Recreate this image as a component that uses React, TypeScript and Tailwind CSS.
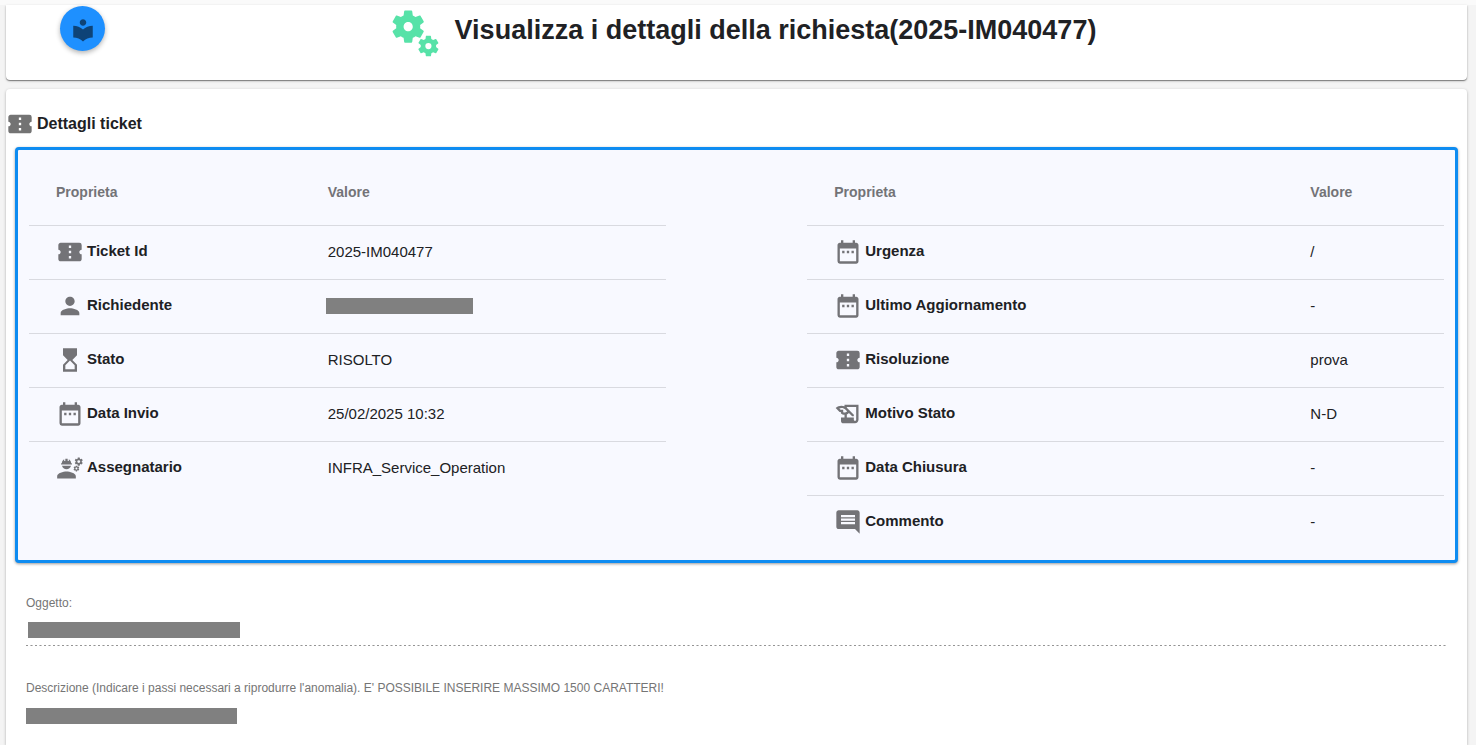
import React from "react";
import type { IconType } from "react-icons";
import {
  MdComment,
  MdConfirmationNumber,
  MdDateRange,
  MdEngineering,
  MdHistoryEdu,
  MdHourglassTop,
  MdLocalLibrary,
  MdMiscellaneousServices,
  MdPerson,
} from "react-icons/md";

type Row = { icon: IconType; label: string; value?: string };

const requestRows: Row[] = [
  { icon: MdConfirmationNumber, label: "Ticket Id", value: "2025-IM040477" },
  { icon: MdPerson, label: "Richiedente" },
  { icon: MdHourglassTop, label: "Stato", value: "RISOLTO" },
  { icon: MdDateRange, label: "Data Invio", value: "25/02/2025 10:32" },
  { icon: MdEngineering, label: "Assegnatario", value: "INFRA_Service_Operation" },
];

const progressRows: Row[] = [
  { icon: MdDateRange, label: "Urgenza", value: "/" },
  { icon: MdDateRange, label: "Ultimo Aggiornamento", value: "-" },
  { icon: MdConfirmationNumber, label: "Risoluzione", value: "prova" },
  { icon: MdHistoryEdu, label: "Motivo Stato", value: "N-D" },
  { icon: MdDateRange, label: "Data Chiusura", value: "-" },
  { icon: MdComment, label: "Commento", value: "-" },
];

function PropertyTable({ rows, labelWidth }: { rows: Row[]; labelWidth: string }) {
  return (
    <table className="w-[45%] table-fixed self-start border-collapse text-left">
      <thead>
        <tr className="h-16 border-b border-[#d9dae0] text-sm text-[#737377]">
          <th className={`${labelWidth} pb-0.5 pl-[27px] font-bold`}>Proprieta</th>
          <th className="pb-0.5 pl-0.5 font-bold">Valore</th>
        </tr>
      </thead>
      <tbody>
        {rows.map(({ icon: Icon, label, value }) => (
          <tr key={label} className="h-[54px] border-b border-[#d9dae0] text-[15px] text-[#202124] last:border-b-0">
            <th scope="row" className="pl-[27px] font-bold">
              <span className="flex items-center gap-[3px]">
                <Icon className="size-7 shrink-0 text-[#737377]" />
                <span className="pb-0.5">{label}</span>
              </span>
            </th>
            <td>
              {value ? <span className="pl-0.5">{value}</span> : <span className="block h-4 w-[147px] bg-[#808080]" />}
            </td>
          </tr>
        ))}
      </tbody>
    </table>
  );
}

export default function App() {
  return (
    <div className="flex min-h-screen flex-col border-t-[5px] border-[#fafafa] bg-[#f4f4f4] pr-[9px] pl-1.5 font-['Liberation_Sans',Arial,sans-serif] text-[#202124]">
      <header className="grid h-[75px] grid-cols-[1fr_auto_1fr] items-start rounded-b bg-white pt-px pr-[43px] pl-[54px] shadow-[0_1px_1px_rgba(0,0,0,0.4),0_1px_3px_rgba(0,0,0,0.2)]">
        <button
          type="button"
          aria-label="Guida"
          className="flex size-[45px] items-center justify-center rounded-full bg-[#1e90ff] pt-0.5 text-[#0e4377] shadow-[0_2px_5px_rgba(0,0,0,0.3)]"
        >
          <MdLocalLibrary className="size-[26px]" />
        </button>
        <div className="flex items-start gap-3">
          <MdMiscellaneousServices className="size-[55px] shrink-0 text-[#57e2a8]" />
          <h1 className="pt-2 text-[27px] leading-8 font-bold">Visualizza i dettagli della richiesta(2025-IM040477)</h1>
        </div>
      </header>

      <main className="mt-[9px] grow rounded-t bg-white px-[9px] pt-5 shadow-[0_1px_3px_rgba(0,0,0,0.3)]">
        <h2 className="-ml-[9px] flex h-[30px] items-center gap-[3px] text-base font-bold">
          <MdConfirmationNumber className="size-7 text-[#737373]" />
          Dettagli ticket
        </h2>

        <section className="mt-2 flex justify-between rounded-sm border-3 border-[#0e8cf1] bg-[#f8f9ff] p-[11px] shadow-[0_1px_3px_rgba(0,0,0,0.4)]">
          <PropertyTable rows={requestRows} labelWidth="w-[46.6%]" />
          <PropertyTable rows={progressRows} labelWidth="w-[78.7%]" />
        </section>

        <form className="px-[11px] pt-8 text-xs text-[#757575]">
          <label htmlFor="oggetto" className="block leading-4">
            Oggetto:
          </label>
          <div className="mt-[11px] flex h-6 items-start bg-[linear-gradient(to_right,#949494_2px,transparent_2px,transparent_4px,#c4c4c4_4px,#c4c4c4_5px,#949494_5px,#949494_6px,#c4c4c4_6px,#c4c4c4_7px,transparent_7px)] bg-[length:9px_1px] bg-bottom-left bg-repeat-x pl-0.5">
            <span className="h-4 w-[212px] bg-[#808080]" />
            <input id="oggetto" readOnly className="h-4 grow bg-transparent outline-none" />
          </div>
          <label htmlFor="descrizione" className="mt-[34px] block leading-4">
            Descrizione (Indicare i passi necessari a riprodurre l'anomalia). E' POSSIBILE INSERIRE MASSIMO 1500 CARATTERI!
          </label>
          <div className="mt-3 flex">
            <span className="h-4 w-[211px] bg-[#808080]" />
            <textarea id="descrizione" rows={1} readOnly className="h-4 grow resize-none bg-transparent outline-none" />
          </div>
        </form>
      </main>
    </div>
  );
}
